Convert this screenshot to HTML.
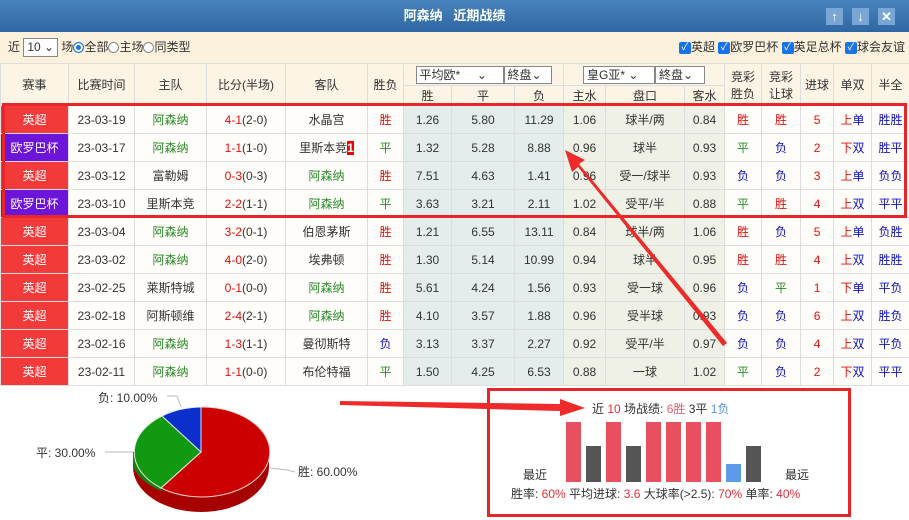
<!DOCTYPE html>
<html><head><meta charset="utf-8"><style>
*{margin:0;padding:0;box-sizing:border-box}
body{width:909px;height:520px;overflow:hidden;background:#fff;font-family:"Liberation Sans","Noto Sans CJK SC",sans-serif;font-size:12px;color:#333;position:relative}
.title{position:absolute;left:0;top:0;width:909px;height:32px;background:linear-gradient(#4a84bd,#2e67a3);color:#fff;font-weight:bold;font-size:13px;text-align:center;line-height:32px}
.btn{position:absolute;top:8px;width:17px;height:17px;background:#7aa6d6;color:#fff;font-size:13px;line-height:17px;text-align:center;font-weight:bold}
.filter{position:absolute;left:0;top:32px;width:909px;height:31px;background:#fcf1dc;line-height:31px;font-size:12px}
.sel{display:inline-block;border:1px solid #888;background:#fff;height:19px;line-height:17px;padding:0 3px;vertical-align:middle;font-size:12px}
.rad{display:inline-block;width:11px;height:11px;border:1px solid #888;border-radius:50%;vertical-align:middle;background:#fff}
.rad.on{background:#1a73e8;border-color:#1a73e8;box-shadow:inset 0 0 0 2px #fff}
.chk{display:inline-block;width:12px;height:12px;background:#1a73e8;color:#fff;font-size:10px;line-height:12px;text-align:center;vertical-align:middle;border-radius:2px}
table{position:absolute;left:0;top:63px;border-collapse:collapse;table-layout:fixed;width:909px}
td{border:1px solid #ddd;text-align:center;height:28px;padding:0;white-space:nowrap;font-size:12px;background:#fffdf9}
tr.h td{background:#fcf4e4;height:22px}
tr.h2 td{background:#fcf4e4;height:20px}
td.o{background:#e4ecec}
td.a{background:#f0f1e6}
.yc{background:#f23a3a!important;color:#fff}
.ol{background:#6d14da!important;color:#fff}
.g{color:#2a8a2a}.r{color:#e01010}.b{color:#1010c0}
.hs{display:inline-block;border:1px solid #888;background:#fff;height:18px;line-height:16px;text-align:left;padding:0 3px;font-size:12px}
</style></head><body>
<div class="title">阿森纳 &nbsp;&nbsp;近期战绩</div>
<div class="btn" style="left:826px">↑</div><div class="btn" style="left:852px">↓</div><div class="btn" style="left:878px">✕</div>
<div class="filter"><span style="margin-left:8px">近 </span><span class="sel">10 ⌄</span> 场<span class="rad on"></span>全部<span class="rad"></span>主场<span class="rad"></span>同类型
<span style="position:absolute;right:4px;top:0"><span class="chk">✓</span>英超 <span class="chk">✓</span>欧罗巴杯 <span class="chk">✓</span>英足总杯 <span class="chk">✓</span>球会友谊</span></div>
<table>
<colgroup><col style="width:68px"><col style="width:66px"><col style="width:72px"><col style="width:79px"><col style="width:82px"><col style="width:36px"><col style="width:48px"><col style="width:63px"><col style="width:49px"><col style="width:42px"><col style="width:79px"><col style="width:40px"><col style="width:37px"><col style="width:39px"><col style="width:33px"><col style="width:38px"><col style="width:38px"></colgroup>
<tr class="h"><td rowspan="2">赛事</td><td rowspan="2">比赛时间</td><td rowspan="2">主队</td><td rowspan="2">比分(半场)</td><td rowspan="2">客队</td><td rowspan="2">胜负</td>
<td colspan="3"><span class="hs" style="width:88px">平均欧* &nbsp;&nbsp;&nbsp;&nbsp;⌄</span><span class="hs" style="width:48px">終盘⌄</span></td>
<td colspan="3"><span class="hs" style="width:72px">皇G亚* ⌄</span><span class="hs" style="width:50px">終盘⌄</span></td>
<td rowspan="2">竞彩<br>胜负</td><td rowspan="2">竞彩<br>让球</td><td rowspan="2">进球</td><td rowspan="2">单双</td><td rowspan="2">半全</td></tr>
<tr class="h2"><td>胜</td><td>平</td><td>负</td><td>主水</td><td>盘口</td><td>客水</td></tr>
<tr><td class="yc">英超</td><td>23-03-19</td><td class="g">阿森纳</td><td><span class="r">4-1</span>(2-0)</td><td>水晶宫</td><td class="r">胜</td><td class="o">1.26</td><td class="o">5.80</td><td class="o">11.29</td><td class="a">1.06</td><td class="a">球半/两</td><td class="a">0.84</td><td class="r">胜</td><td class="r">胜</td><td class="r">5</td><td><span class="r">上</span><span class="b">单</span></td><td class="b">胜胜</td></tr>
<tr><td class="ol">欧罗巴杯</td><td>23-03-17</td><td class="g">阿森纳</td><td><span class="r">1-1</span>(1-0)</td><td>里斯本竞<span style="background:#e00;color:#fff;font-weight:bold">1</span></td><td class="g">平</td><td class="o">1.32</td><td class="o">5.28</td><td class="o">8.88</td><td class="a">0.96</td><td class="a">球半</td><td class="a">0.93</td><td class="g">平</td><td class="b">负</td><td class="r">2</td><td><span class="r">下</span><span class="b">双</span></td><td class="b">胜平</td></tr>
<tr><td class="yc">英超</td><td>23-03-12</td><td>富勒姆</td><td><span class="r">0-3</span>(0-3)</td><td class="g">阿森纳</td><td class="r">胜</td><td class="o">7.51</td><td class="o">4.63</td><td class="o">1.41</td><td class="a">0.96</td><td class="a">受一/球半</td><td class="a">0.93</td><td class="b">负</td><td class="b">负</td><td class="r">3</td><td><span class="r">上</span><span class="b">单</span></td><td class="b">负负</td></tr>
<tr><td class="ol">欧罗巴杯</td><td>23-03-10</td><td>里斯本竞</td><td><span class="r">2-2</span>(1-1)</td><td class="g">阿森纳</td><td class="g">平</td><td class="o">3.63</td><td class="o">3.21</td><td class="o">2.11</td><td class="a">1.02</td><td class="a">受平/半</td><td class="a">0.88</td><td class="g">平</td><td class="r">胜</td><td class="r">4</td><td><span class="r">上</span><span class="b">双</span></td><td class="b">平平</td></tr>
<tr><td class="yc">英超</td><td>23-03-04</td><td class="g">阿森纳</td><td><span class="r">3-2</span>(0-1)</td><td>伯恩茅斯</td><td class="r">胜</td><td class="o">1.21</td><td class="o">6.55</td><td class="o">13.11</td><td class="a">0.84</td><td class="a">球半/两</td><td class="a">1.06</td><td class="r">胜</td><td class="b">负</td><td class="r">5</td><td><span class="r">上</span><span class="b">单</span></td><td class="b">负胜</td></tr>
<tr><td class="yc">英超</td><td>23-03-02</td><td class="g">阿森纳</td><td><span class="r">4-0</span>(2-0)</td><td>埃弗顿</td><td class="r">胜</td><td class="o">1.30</td><td class="o">5.14</td><td class="o">10.99</td><td class="a">0.94</td><td class="a">球半</td><td class="a">0.95</td><td class="r">胜</td><td class="r">胜</td><td class="r">4</td><td><span class="r">上</span><span class="b">双</span></td><td class="b">胜胜</td></tr>
<tr><td class="yc">英超</td><td>23-02-25</td><td>莱斯特城</td><td><span class="r">0-1</span>(0-0)</td><td class="g">阿森纳</td><td class="r">胜</td><td class="o">5.61</td><td class="o">4.24</td><td class="o">1.56</td><td class="a">0.93</td><td class="a">受一球</td><td class="a">0.96</td><td class="b">负</td><td class="g">平</td><td class="r">1</td><td><span class="r">下</span><span class="b">单</span></td><td class="b">平负</td></tr>
<tr><td class="yc">英超</td><td>23-02-18</td><td>阿斯顿维</td><td><span class="r">2-4</span>(2-1)</td><td class="g">阿森纳</td><td class="r">胜</td><td class="o">4.10</td><td class="o">3.57</td><td class="o">1.88</td><td class="a">0.96</td><td class="a">受半球</td><td class="a">0.93</td><td class="b">负</td><td class="b">负</td><td class="r">6</td><td><span class="r">上</span><span class="b">双</span></td><td class="b">胜负</td></tr>
<tr><td class="yc">英超</td><td>23-02-16</td><td class="g">阿森纳</td><td><span class="r">1-3</span>(1-1)</td><td>曼彻斯特</td><td class="b">负</td><td class="o">3.13</td><td class="o">3.37</td><td class="o">2.27</td><td class="a">0.92</td><td class="a">受平/半</td><td class="a">0.97</td><td class="b">负</td><td class="b">负</td><td class="r">4</td><td><span class="r">上</span><span class="b">双</span></td><td class="b">平负</td></tr>
<tr><td class="yc">英超</td><td>23-02-11</td><td class="g">阿森纳</td><td><span class="r">1-1</span>(0-0)</td><td>布伦特福</td><td class="g">平</td><td class="o">1.50</td><td class="o">4.25</td><td class="o">6.53</td><td class="a">0.88</td><td class="a">一球</td><td class="a">1.02</td><td class="g">平</td><td class="b">负</td><td class="r">2</td><td><span class="r">下</span><span class="b">双</span></td><td class="b">平平</td></tr>
</table>
<div style="position:absolute;left:2px;top:103px;width:905px;height:115px;border:3px solid #e8262a"></div>
<div style="position:absolute;left:487px;top:388px;width:364px;height:129px;border:3px solid #e8262a"></div>
<svg style="position:absolute;left:0;top:0" width="909" height="520">
<!-- pie -->
<path d="M133 452 v15 A68 45 0 0 0 269 467 v-15 Z" fill="#a60000"/>
<path d="M133 452 v15 A68 45 0 0 0 161 491 v-15 Z" fill="#1d7a10"/>
<path d="M201 452 L201 407 A68 45 0 1 1 161 488 Z" fill="#cc0000" stroke="#f3d0d0" stroke-width="1"/>
<path d="M201 452 L161 488 A68 45 0 0 1 162 416 Z" fill="#119911" stroke="#e0f0e0" stroke-width="1"/>
<path d="M201 452 L162 416 A68 45 0 0 1 201 407 Z" fill="#0a2fcc" stroke="#e0e0f0" stroke-width="1"/>
<polyline points="167,396 177,396 181,407" fill="none" stroke="#bbb"/>
<polyline points="105,452 133,452" fill="none" stroke="#bbb"/>
<polyline points="270,468 287,470 295,472" fill="none" stroke="#bbb"/>
<text x="98" y="402" font-size="12" font-family="Liberation Sans,Noto Sans CJK SC,sans-serif" fill="#333">负: 10.00%</text>
<text x="36" y="457" font-size="12" font-family="Liberation Sans,Noto Sans CJK SC,sans-serif" fill="#333">平: 30.00%</text>
<text x="298" y="476" font-size="12" font-family="Liberation Sans,Noto Sans CJK SC,sans-serif" fill="#333">胜: 60.00%</text>
<!-- bars -->
<g fill="#e85060"><rect x="566" y="422" width="15" height="60"/><rect x="606" y="422" width="15" height="60"/><rect x="646" y="422" width="15" height="60"/><rect x="666" y="422" width="15" height="60"/><rect x="686" y="422" width="15" height="60"/><rect x="706" y="422" width="15" height="60"/></g>
<g fill="#555"><rect x="586" y="446" width="15" height="36"/><rect x="626" y="446" width="15" height="36"/><rect x="746" y="446" width="15" height="36"/></g>
<rect x="726" y="464" width="15" height="18" fill="#5b9be8"/>
<g font-size="12" font-family="Liberation Sans,Noto Sans CJK SC,sans-serif" fill="#333">
<text x="592" y="413">近 <tspan fill="#e0303a">10</tspan> 场战绩: <tspan fill="#e06070">6胜</tspan> 3平 <tspan fill="#5b8ee0">1负</tspan></text>
<text x="523" y="479">最近</text><text x="785" y="479">最远</text>
<text x="511" y="498">胜率: <tspan fill="#e0303a">60%</tspan> 平均进球: <tspan fill="#e0303a">3.6</tspan> 大球率(&gt;2.5): <tspan fill="#e0303a">70%</tspan> 单率: <tspan fill="#e0303a">40%</tspan></text>
</g>
<!-- arrows -->
<polygon points="340,401 560,404 560,399 585,408 560,416 560,411 340,405" fill="#ee2a2a"/>
<polygon points="727,343 723,346 578,167 572,172 565,150 585,160 579,164" fill="#ee2a2a"/>
</svg>
</body></html>
